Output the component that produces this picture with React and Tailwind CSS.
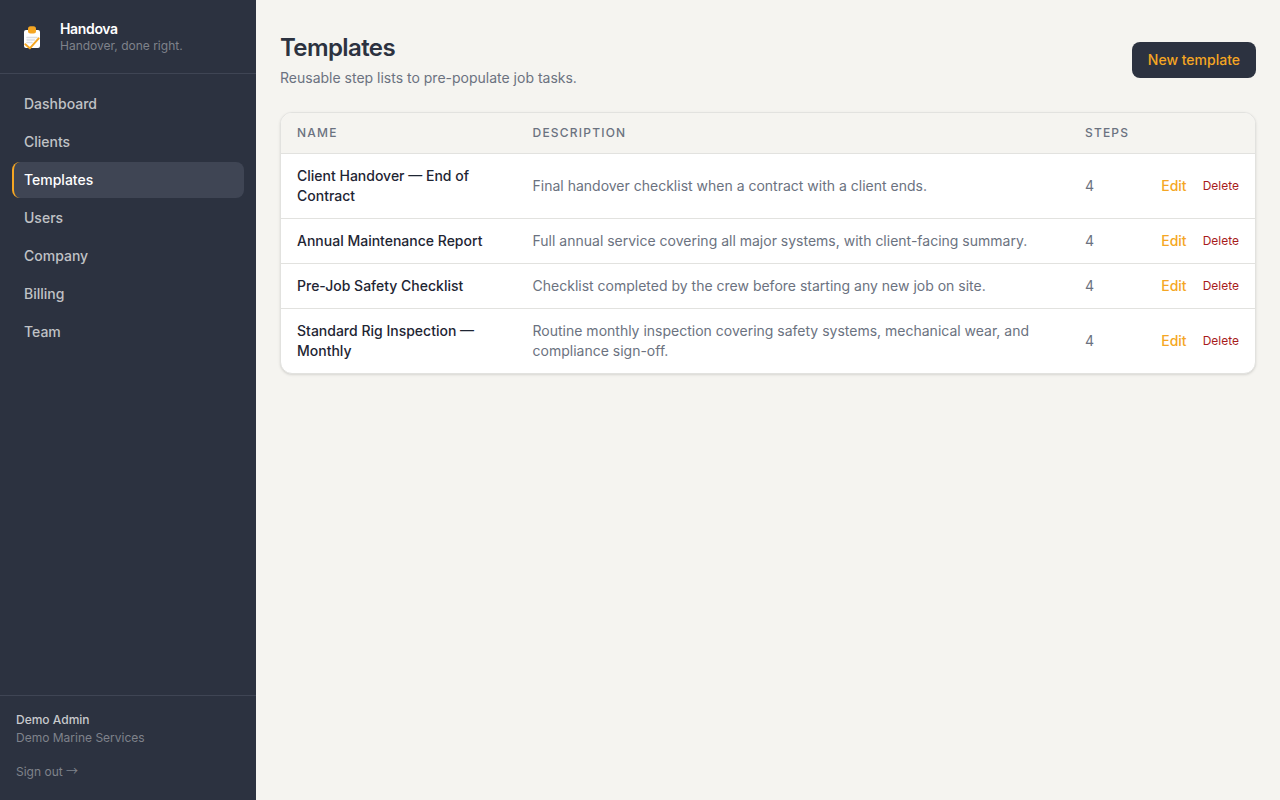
import React from "react";

const navItems = [
  "Dashboard",
  "Clients",
  "Templates",
  "Users",
  "Company",
  "Billing",
  "Team",
];

const templates = [
  {
    name: "Client Handover — End of Contract",
    description: "Final handover checklist when a contract with a client ends.",
    steps: 4,
  },
  {
    name: "Annual Maintenance Report",
    description:
      "Full annual service covering all major systems, with client-facing summary.",
    steps: 4,
  },
  {
    name: "Pre-Job Safety Checklist",
    description:
      "Checklist completed by the crew before starting any new job on site.",
    steps: 4,
  },
  {
    name: "Standard Rig Inspection — Monthly",
    description:
      "Routine monthly inspection covering safety systems, mechanical wear, and compliance sign-off.",
    steps: 4,
  },
];

function Logo() {
  return (
    <svg viewBox="0 0 32 32" className="h-8 w-8 shrink-0" aria-hidden="true">
      <rect x="8" y="9" width="16" height="18" rx="2" fill="#ffffff" />
      <rect x="12" y="5.2" width="8" height="7.3" rx="2.5" fill="#f5a623" />
      <path
        d="M11 16.5h10M11 19h7.5M11 21.5h5"
        stroke="#dcdee3"
        strokeWidth="1.5"
        strokeLinecap="round"
      />
      <path
        d="M9.3 23.3 13.8 27.3 22.7 17.4"
        fill="none"
        stroke="#f5a623"
        strokeWidth="2"
        strokeLinecap="round"
        strokeLinejoin="round"
      />
    </svg>
  );
}

function Sidebar() {
  return (
    <aside className="flex w-64 shrink-0 flex-col bg-[#2c3240]">
      <div className="flex items-center gap-3 border-b border-[#3f4554] px-4 pt-5 pb-[19px]">
        <Logo />
        <div>
          <p className="text-sm leading-[18px] font-semibold tracking-tight text-white">
            Handova
          </p>
          <p className="text-xs text-[#7f828b]">Handover, done right.</p>
        </div>
      </div>

      <nav className="flex flex-1 flex-col gap-0.5 p-3">
        {navItems.map((item) => (
          <a
            key={item}
            href="#"
            className={
              item === "Templates"
                ? "rounded-lg border-l-2 border-[#f5a623] bg-[#3f4554] py-2 pr-3 pl-2.5 text-sm font-medium text-white"
                : "rounded-lg px-3 py-2 text-sm font-medium text-[#c0c2c6]"
            }
          >
            {item}
          </a>
        ))}
      </nav>

      <div className="border-t border-[#3f4554] p-4">
        <p className="text-xs font-medium text-[#c8cacd]">Demo Admin</p>
        <p className="mt-0.5 text-xs text-[#7f828b]">Demo Marine Services</p>
        <button className="mt-3.5 block py-1 text-xs text-[#7f828b]">
          Sign out{" "}
          <span className="font-['Noto_Sans_CJK_JP',sans-serif] leading-none">
            →
          </span>
        </button>
      </div>
    </aside>
  );
}

export default function App() {
  return (
    <div className="flex min-h-screen bg-[#f5f4f0] font-['Inter',sans-serif]">
      <Sidebar />

      <main className="min-w-0 flex-1 px-6 py-8">
        {/* Header */}
        <header className="flex items-center justify-between">
          <div>
            <h1 className="text-2xl font-semibold tracking-tight text-[#2c3240]">
              Templates
            </h1>
            <p className="mt-1 text-sm text-[#6b7280]">
              Reusable step lists to pre-populate job tasks.
            </p>
          </div>
          <button className="rounded-lg bg-[#2c3240] px-4 py-2 text-sm font-medium text-[#f5a623]">
            New template
          </button>
        </header>

        {/* Template list */}
        <div className="mt-6 overflow-hidden rounded-xl border border-[#e2e2df] bg-white shadow-sm">
          <table className="w-full text-left text-sm">
            <thead className="bg-[#f5f4f0]">
              <tr className="border-b border-[#e2e2df] text-xs tracking-widest text-[#6b7280] uppercase">
                <th className="px-4 py-3 font-medium">Name</th>
                <th className="px-4 py-3 font-medium">Description</th>
                <th className="px-4 py-3 font-medium">Steps</th>
                <th className="px-4 py-3" aria-label="Actions" />
              </tr>
            </thead>
            <tbody className="divide-y divide-[#e2e2df]">
              {templates.map((template) => (
                <tr key={template.name}>
                  <td className="px-4 py-3 font-medium text-[#1e2533]">
                    {template.name}
                  </td>
                  <td className="px-4 py-3 text-[#6b7280]">
                    {template.description}
                  </td>
                  <td className="px-4 py-3 text-[#6b7280]">{template.steps}</td>
                  <td className="px-4 py-3">
                    <div className="flex items-center justify-end gap-4">
                      <a href="#" className="font-medium text-[#f5a623]">
                        Edit
                      </a>
                      <button className="text-xs text-[#a81c1c]">Delete</button>
                    </div>
                  </td>
                </tr>
              ))}
            </tbody>
          </table>
        </div>
      </main>
    </div>
  );
}
